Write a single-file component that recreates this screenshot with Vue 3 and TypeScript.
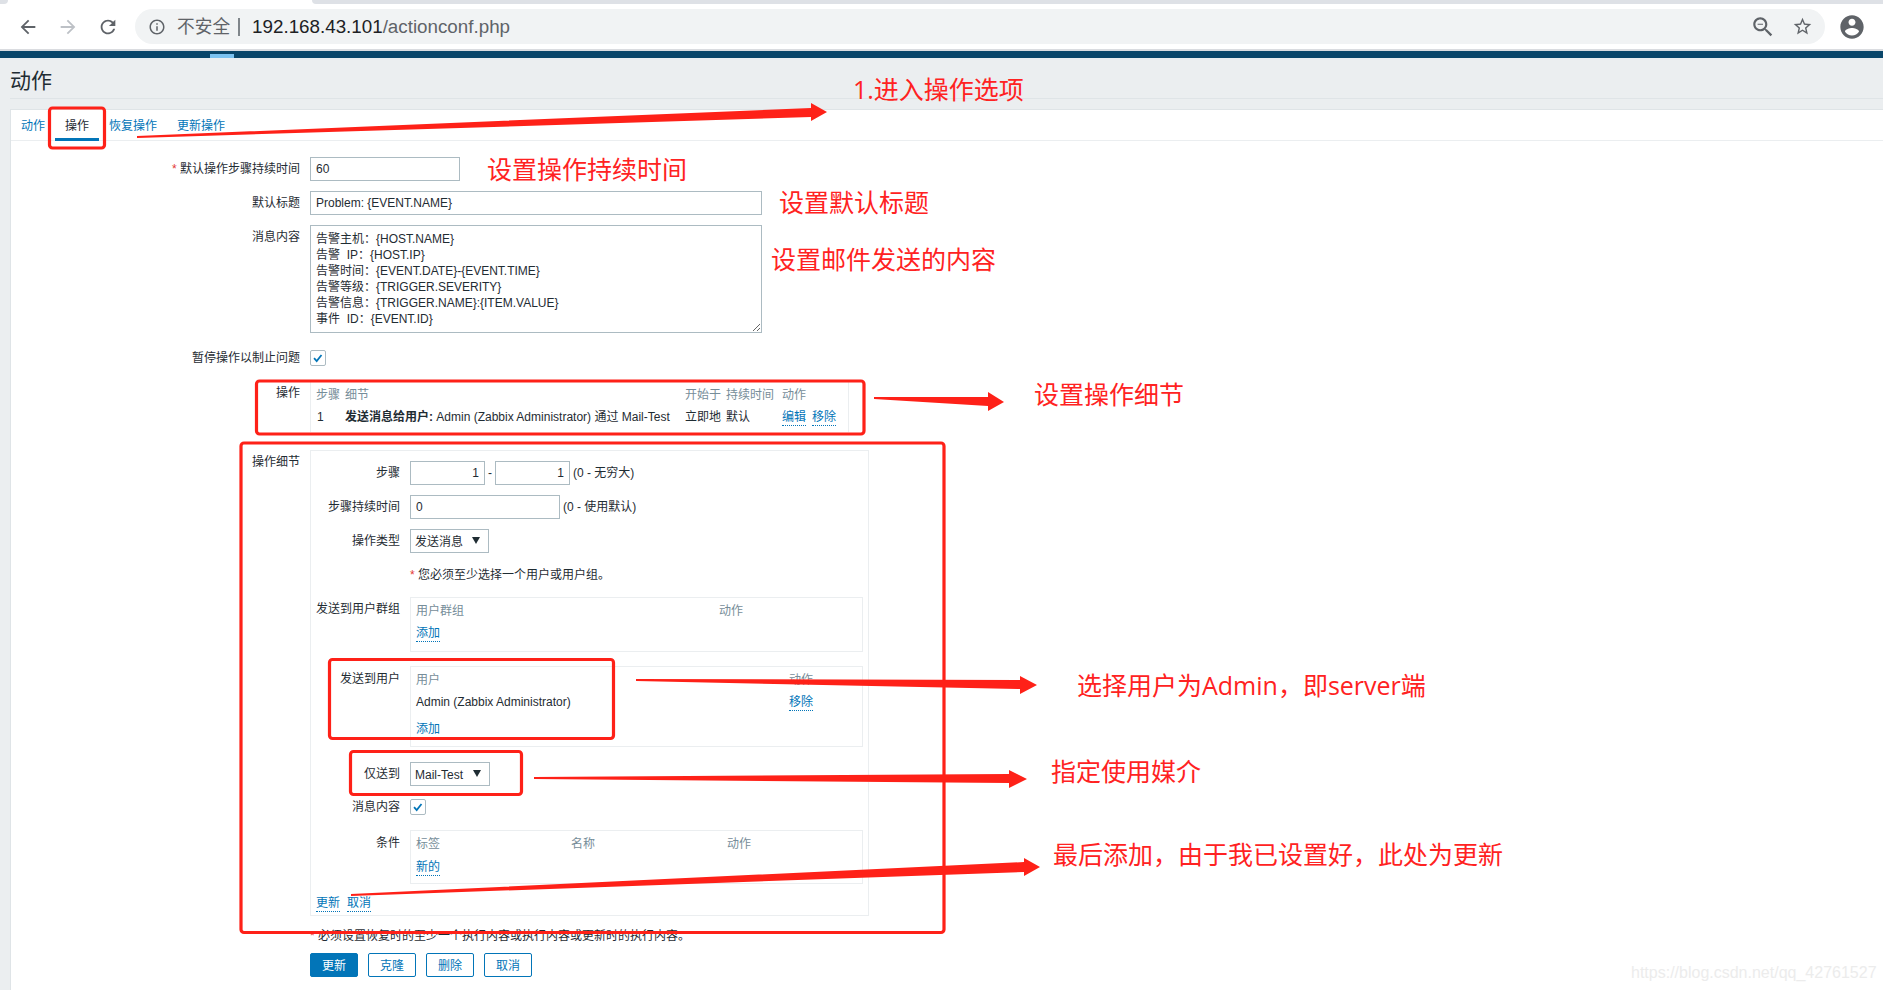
<script setup lang="ts">
const message = [
  '告警主机：{HOST.NAME}',
  '告警  IP：{HOST.IP}',
  '告警时间：{EVENT.DATE}-{EVENT.TIME}',
  '告警等级：{TRIGGER.SEVERITY}',
  '告警信息：{TRIGGER.NAME}:{ITEM.VALUE}',
  '事件  ID：{EVENT.ID}',
].join('\n')

const tabs = ['动作', '操作', '恢复操作', '更新操作']

interface Note { text: string; x: number; y: number }
const notes: Note[] = [
  { text: '1.进入操作选项', x: 853, y: 89 },
  { text: '设置操作持续时间', x: 487, y: 169 },
  { text: '设置默认标题', x: 779, y: 202 },
  { text: '设置邮件发送的内容', x: 771, y: 259 },
  { text: '设置操作细节', x: 1034, y: 394 },
  { text: '选择用户为Admin，即server端', x: 1077, y: 685 },
  { text: '指定使用媒介', x: 1051, y: 771 },
  { text: '最后添加，由于我已设置好，此处为更新', x: 1053, y: 854 },
]
const noteStyle = (n: Note) => ({ left: n.x + 'px', top: n.y - 18 + 'px' })

const frames = [
  { x: 49.5, y: 108, w: 55, h: 40 },
  { x: 256.5, y: 381, w: 607.5, h: 53 },
  { x: 241, y: 443, w: 703, h: 489.5 },
  { x: 329.5, y: 659.5, w: 284, h: 79 },
  { x: 350.5, y: 751.5, w: 171, h: 43 },
]
const arrows = [
  '137,136 811,108 811,103 827,112 811,121 811,117 137,138',
  '874,397 988,397 988,392 1004,402 988,411 988,406 874,399',
  '636,679 1020,680 1020,676 1037,685 1020,694 1020,689 636,681',
  '534,777 1009,774 1009,770 1027,779 1009,788 1009,783 534,779',
  '351,894 1024,862 1024,858 1040,867 1024,876 1024,872 351,896',
]
</script>

<template>
  <div class="page">
    <header class="browser">
      <div class="strip">
        <span class="strip-left"></span>
        <span class="strip-tab"></span>
        <span class="strip-right"></span>
      </div>
      <div class="toolbar">
        <svg class="nav-icon" viewBox="0 0 24 24"><path fill="#5f6368" d="M20 11H7.83l5.59-5.59L12 4l-8 8 8 8 1.41-1.41L7.83 13H20v-2z"/></svg>
        <svg class="nav-icon" viewBox="0 0 24 24"><path fill="#bdc1c6" d="M12 4l-1.41 1.41L16.17 11H4v2h12.17l-5.58 5.59L12 20l8-8z"/></svg>
        <svg class="nav-icon" viewBox="0 0 24 24"><path fill="#5f6368" d="M17.65 6.35C16.2 4.9 14.21 4 12 4c-4.42 0-7.99 3.58-7.99 8s3.57 8 7.99 8c3.73 0 6.84-2.55 7.73-6h-2.08c-.82 2.33-3.04 4-5.65 4-3.31 0-6-2.69-6-6s2.69-6 6-6c1.66 0 3.14.69 4.22 1.78L13 11h7V4l-2.35 2.35z"/></svg>
        <div class="omnibox">
          <svg class="info-icon" viewBox="0 0 24 24"><path fill="#5f6368" d="M11 7h2v2h-2zm0 4h2v6h-2zm1-9C6.48 2 2 6.48 2 12s4.48 10 10 10 10-4.48 10-10S17.52 2 12 2zm0 18c-4.41 0-8-3.59-8-8s3.59-8 8-8 8 3.59 8 8-3.59 8-8 8z"/></svg>
          <span class="insecure">不安全</span>
          <span class="omni-sep"></span>
          <span class="url"><span class="url-host">192.168.43.101</span>/actionconf.php</span>
          <svg class="zoom-icon" viewBox="0 0 24 24"><path fill="#5f6368" d="M15.5 14h-.79l-.28-.27C15.41 12.59 16 11.11 16 9.5 16 5.91 13.09 3 9.5 3S3 5.91 3 9.5 5.91 16 9.5 16c1.61 0 3.09-.59 4.23-1.57l.27.28v.79l5 4.99L20.49 19l-4.99-5zm-6 0C7.01 14 5 11.99 5 9.5S7.01 5 9.5 5 14 7.01 14 9.5 11.99 14 9.5 14zM7 9h5v1H7z"/></svg>
          <svg class="star-icon" viewBox="0 0 24 24"><path fill="#5f6368" d="M22 9.24l-7.19-.62L12 2 9.19 8.63 2 9.24l5.46 4.73L5.82 21 12 17.27 18.18 21l-1.63-7.03L22 9.24zM12 15.4l-3.76 2.27 1-4.28-3.32-2.88 4.38-.38L12 6.1l1.71 4.04 4.38.38-3.32 2.88 1 4.28L12 15.4z"/></svg>
        </div>
        <svg class="avatar" viewBox="0 0 24 24"><path fill="#5f6368" d="M12 2C6.48 2 2 6.48 2 12s4.48 10 10 10 10-4.48 10-10S17.52 2 12 2zm0 3c1.66 0 3 1.34 3 3s-1.34 3-3 3-3-1.34-3-3 1.34-3 3-3zm0 14.2c-2.5 0-4.71-1.28-6-3.22.03-1.99 4-3.08 6-3.08 1.99 0 5.97 1.09 6 3.08-1.29 1.94-3.5 3.22-6 3.22z"/></svg>
      </div>
    </header>

    <div class="navbar"><span class="nav-mark"></span></div>

    <main class="content">
      <h1 class="title">动作</h1>
      <section class="panel">
        <nav class="tabs">
          <a v-for="(t, i) in tabs" :key="t" class="tab" :class="{ active: i === 1 }">{{ t }}</a>
        </nav>

        <form class="form">
          <div class="row first">
            <label class="label"><span class="req">* </span>默认操作步骤持续时间</label>
            <input class="input w150" value="60" />
          </div>
          <div class="row gap10">
            <label class="label">默认标题</label>
            <input class="input w452" value="Problem: {EVENT.NAME}" />
          </div>
          <div class="row top gap10">
            <label class="label pad4">消息内容</label>
            <textarea class="textarea" :value="message"></textarea>
          </div>
          <div class="row check-row">
            <label class="label">暂停操作以制止问题</label>
            <span class="check"><svg viewBox="0 0 16 16"><path d="M3.5 8.2l3 3.3 5.5-7" fill="none" stroke="#0275b8" stroke-width="2"/></svg></span>
          </div>

          <div class="row top ops-row">
            <label class="label pad4">操作</label>
            <div class="ops">
              <div class="ops-grid head">
                <span>步骤</span><span>细节</span><span>开始于</span><span>持续时间</span><span>动作</span>
              </div>
              <div class="ops-grid body">
                <span>1</span>
                <span><b>发送消息给用户:</b> Admin (Zabbix Administrator) 通过 Mail-Test</span>
                <span>立即地</span><span>默认</span>
                <span class="links"><a class="link">编辑</a><a class="link">移除</a></span>
              </div>
            </div>
          </div>

          <div class="row top details-row">
            <label class="label pad4">操作细节</label>
            <div class="details">
              <div class="sub first-sub">
                <label class="sub-label">步骤</label>
                <input class="input w75 right" value="1" />
                <span class="dash">-</span>
                <input class="input w75 right" value="1" />
                <span class="hint">(0 - 无穷大)</span>
              </div>
              <div class="sub mt10">
                <label class="sub-label">步骤持续时间</label>
                <input class="input w150" value="0" />
                <span class="hint">(0 - 使用默认)</span>
              </div>
              <div class="sub mt10">
                <label class="sub-label">操作类型</label>
                <div class="select w79"><span>发送消息</span><i class="caret"></i></div>
              </div>
              <div class="sub warn-row">
                <span class="sub-label"></span>
                <span><span class="req">* </span>您必须至少选择一个用户或用户组。</span>
              </div>
              <div class="sub top mt14">
                <label class="sub-label pad4">发送到用户群组</label>
                <div class="subtable groups">
                  <div class="cols cols-group head"><span>用户群组</span><span>动作</span></div>
                  <div class="cell-add"><a class="link">添加</a></div>
                </div>
              </div>
              <div class="sub top mt14">
                <label class="sub-label pad5">发送到用户</label>
                <div class="subtable users">
                  <div class="cols cols-user head"><span>用户</span><span>动作</span></div>
                  <div class="cols cols-user user-row"><span>Admin (Zabbix Administrator)</span><span><a class="link">移除</a></span></div>
                  <div class="user-add"><a class="link">添加</a></div>
                </div>
              </div>
              <div class="sub mt15">
                <label class="sub-label">仅送到</label>
                <div class="select w80"><span>Mail-Test</span><i class="caret"></i></div>
              </div>
              <div class="sub msg-row">
                <label class="sub-label">消息内容</label>
                <span class="check"><svg viewBox="0 0 16 16"><path d="M3.5 8.2l3 3.3 5.5-7" fill="none" stroke="#0275b8" stroke-width="2"/></svg></span>
              </div>
              <div class="sub top mt15">
                <label class="sub-label pad5">条件</label>
                <div class="subtable conds">
                  <div class="cols cols-cond head"><span>标签</span><span>名称</span><span>动作</span></div>
                  <div class="cell-add cond-add"><a class="link">新的</a></div>
                </div>
              </div>
              <div class="detail-links"><a class="link">更新</a><a class="link">取消</a></div>
            </div>
          </div>

          <div class="row form-note">
            <span class="label"></span>
            <span class="note-text"><span class="req">* </span>必须设置恢复时的至少一个执行内容或执行内容或更新时的执行内容。</span>
          </div>
          <div class="row buttons">
            <span class="label"></span>
            <div class="btns">
              <button type="button" class="btn primary">更新</button>
              <button type="button" class="btn">克隆</button>
              <button type="button" class="btn">删除</button>
              <button type="button" class="btn">取消</button>
            </div>
          </div>
        </form>
      </section>
    </main>

    <svg class="marks" viewBox="0 0 1883 990" width="1883" height="990">
      <rect v-for="(f, i) in frames" :key="i" :x="f.x" :y="f.y" :width="f.w" :height="f.h" rx="3" fill="none" stroke="#fe2118" stroke-width="3.2"/>
      <polygon v-for="(a, i) in arrows" :key="'a' + i" :points="a" fill="#fe2118"/>
    </svg>
    <div v-for="n in notes" :key="n.text" class="note" :style="noteStyle(n)">{{ n.text }}</div>
    <div class="watermark">https://blog.csdn.net/qq_42761527</div>
  </div>
</template>

<style scoped>
.page {
  position: relative;
  width: 1883px;
  height: 990px;
  overflow: hidden;
  background: #ebeef0;
  font-family: "Liberation Sans", "Noto Sans CJK SC", sans-serif;
  font-size: 12px;
  line-height: 16px;
  color: #1f2c33;
  display: flex;
  flex-direction: column;
}
.page * { box-sizing: border-box; }

.browser { background: #fff; height: 49px; flex: none; }
.strip { display: flex; height: 4px; }
.strip-left { width: 8px; background: #dee1e6; border-bottom-right-radius: 4px; }
.strip-tab { width: 304px; }
.strip-right { flex: 1; background: #dee1e6; border-bottom-left-radius: 4px; }
.toolbar { display: flex; align-items: center; height: 35px; margin-top: 5px; padding-left: 17px; }
.nav-icon { width: 22px; height: 22px; margin-right: 18px; flex: none; }
.omnibox {
  width: 1690px;
  height: 35px;
  margin-left: -2px;
  padding: 0 12px 0 13px;
  display: flex;
  align-items: center;
  background: #f1f3f4;
  border-radius: 18px;
  flex: none;
}
.info-icon { width: 18px; height: 18px; flex: none; }
.insecure { margin-left: 11px; font-size: 17.7px; color: #5f6368; white-space: nowrap; }
.omni-sep { width: 2px; height: 18px; background: #80868b; margin: 0 12px 0 8px; }
.url { font-size: 18.8px; color: #5f6368; white-space: nowrap; flex: 1; }
.url-host { color: #202124; }
.zoom-icon { width: 26px; height: 26px; margin-right: 16px; flex: none; }
.star-icon { width: 21px; height: 21px; flex: none; }
.avatar { width: 28px; height: 28px; margin-left: 13px; flex: none; }

.navbar { height: 9px; flex: none; border-top: 2px solid #dadce0; background: #0a466a; padding-top: 3px; display: flex; }
.nav-mark { width: 24px; height: 4px; margin-left: 210px; background: #7cc2f0; }

.content { flex: 1; display: flex; flex-direction: column; padding-left: 11px; min-height: 0; }
.title {
  margin: 0 0 0 -1px;
  height: 41px;
  flex: none;
  font-size: 21px;
  font-weight: 400;
  line-height: 46px;
  border-bottom: 1px solid #dfe4e7;
}
.panel { margin-top: 10px; flex: 1; background: #fff; border-top: 1px solid #dfe4e7; border-left: 1px solid #dfe4e7; margin-left: -1px; padding-left: 1px; }

.tabs { display: flex; height: 31px; border-bottom: 1px solid #ebeef0; margin-left: -1px; }
.tab { width: 44px; text-align: center; color: #0275b8; line-height: 32px; height: 31px; }
.tab:nth-child(n+3) { width: 68px; }
.tab.active { color: #1f2c33; border-bottom: 3px solid #0275b8; }

.form { display: block; margin-left: -1px; }
.row { display: flex; align-items: center; gap: 10px; }
.row.top { align-items: flex-start; }
.first { margin-top: 16px; }
.gap10 { margin-top: 10px; }
.label { width: 289px; flex: none; text-align: right; white-space: nowrap; }
.pad4 { padding-top: 4px; }
.pad5 { padding-top: 5px; }
.req { color: #e33734; }

.input {
  height: 24px;
  border: 1px solid #acbbc2;
  padding: 0 5px;
  font: inherit;
  color: #1f2c33;
  background: #fff;
  outline: none;
  flex: none;
}
.w150 { width: 150px; }
.w452 { width: 452px; }
.w75 { width: 75px; }
.right { text-align: right; }
.textarea {
  display: block;
  width: 452px;
  height: 108px;
  border: 1px solid #acbbc2;
  padding: 5px;
  font: inherit;
  line-height: 16px;
  color: #1f2c33;
  outline: none;
  resize: both;
  overflow: hidden;
  white-space: pre;
}
.check-row { margin-top: 13px; height: 24px; }
.check {
  display: block;
  width: 16px;
  height: 16px;
  border: 1px solid #acbbc2;
  border-radius: 2px;
  background: #fff;
  flex: none;
}
.check svg { display: block; width: 14px; height: 14px; }

.ops-row { margin-top: 11px; }
.ops { width: 539px; height: 51px; border-left: 1px solid #ebeef0; border-right: 1px solid #ebeef0; padding: 6px 0 0 5px; }
.ops-grid { display: grid; grid-template-columns: 29px 340px 41px 56px 1fr; }
.head { color: #768d99; }
.ops-grid.body { margin-top: 6px; white-space: nowrap; }
.ops-grid.body > :first-child { padding-left: 1px; }
.links { display: flex; gap: 6px; }
.link { color: #0275b8; border-bottom: 1px dotted #0275b8; line-height: 16px; height: 17px; display: inline-block; }

.details-row { margin-top: 18px; }
.details { width: 559px; height: 466px; border: 1px solid #ebeef0; padding: 10px 4px 0 5px; }
.sub { display: flex; align-items: center; }
.sub.top { align-items: flex-start; }
.sub-label { width: 84px; margin-right: 10px; flex: none; text-align: right; white-space: nowrap; }
.mt10 { margin-top: 10px; }
.mt14 { margin-top: 14px; }
.mt15 { margin-top: 15px; }
.dash { width: 10px; text-align: center; flex: none; }
.hint { margin-left: 3px; white-space: nowrap; }
.select {
  height: 24px;
  border: 1px solid #acbbc2;
  background: #fff;
  padding: 2px 0 0 4px;
  display: flex;
  align-items: center;
  position: relative;
  flex: none;
}
.w79 { width: 79px; }
.w80 { width: 80px; }
.caret {
  position: absolute;
  right: 8px;
  top: 7px;
  width: 0;
  height: 0;
  border-left: 4px solid transparent;
  border-right: 4px solid transparent;
  border-top: 7px solid #1f2c33;
}
.warn-row { margin-top: 14px; }
.subtable { width: 453px; border: 1px solid #ebeef0; padding: 5px 5px 0; flex: none; }
.groups { height: 55px; }
.users { height: 81px; }
.conds { height: 54px; }
.cols { display: grid; }
.cols-group { grid-template-columns: 303px 1fr; }
.cols-user { grid-template-columns: 373px 1fr; }
.cols-cond { grid-template-columns: 155px 156px 1fr; }
.cell-add { margin-top: 6px; height: 17px; }
.cond-add { margin-top: 7px; }
.user-row { margin-top: 6px; }
.user-add { margin-top: 10px; }
.msg-row { margin-top: 13px; }
.detail-links { margin-top: 11px; display: flex; gap: 7px; }

.form-note { margin-top: 12px; }
.note-text { white-space: nowrap; }
.buttons { margin-top: 9px; }
.btns { display: flex; gap: 10px; }
.btn {
  width: 48px;
  height: 24px;
  border: 1px solid #0275b8;
  border-radius: 2px;
  background: #fff;
  color: #0275b8;
  font: inherit;
  padding: 1px 0 0;
}
.btn.primary { background: #0275b8; color: #fff; }

.marks { position: absolute; left: 0; top: 0; pointer-events: none; }
.note {
  position: absolute;
  font-family: "Open Sans", "Noto Sans CJK SC", sans-serif;
  font-size: 25px;
  line-height: 36px;
  color: #ff2222;
  white-space: nowrap;
}
.watermark {
  position: absolute;
  left: 1631px;
  top: 963px;
  font-size: 16px;
  line-height: 20px;
  color: #ececec;
  white-space: nowrap;
}
</style>

<style>
html, body { margin: 0; overflow: hidden; background: #ebeef0; }
</style>
